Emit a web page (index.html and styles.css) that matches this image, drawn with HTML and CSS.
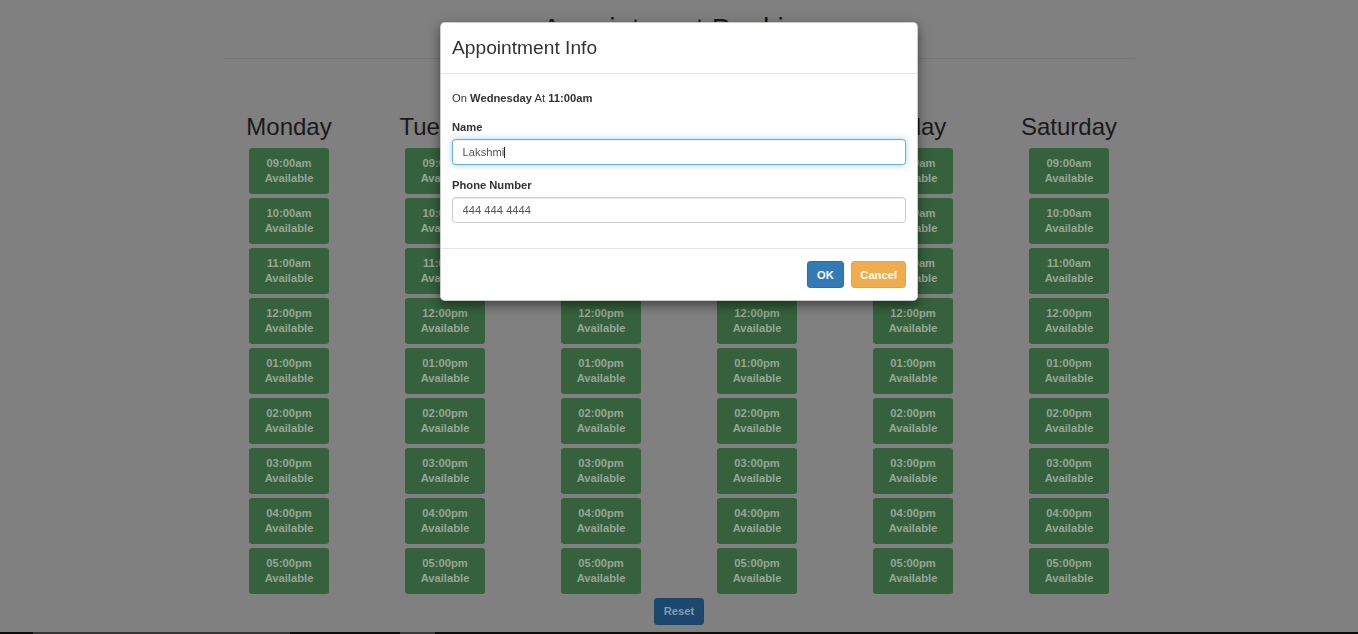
FILE: index.html
```html
<!DOCTYPE html>
<html lang="en">
<head>
<meta charset="utf-8">
<title>Appointment Booking</title>
<link rel="stylesheet" href="styles.css">
</head>
<body>
<div class="page">
  <h1 class="page-title">Appointment Booking</h1>
  <hr class="divider">
  <div class="schedule">
    <div class="day">
      <h2 class="day-name">Monday</h2>
      <div class="slots">
        <button class="slot">09:00am<br>Available</button>
        <button class="slot">10:00am<br>Available</button>
        <button class="slot">11:00am<br>Available</button>
        <button class="slot">12:00pm<br>Available</button>
        <button class="slot">01:00pm<br>Available</button>
        <button class="slot">02:00pm<br>Available</button>
        <button class="slot">03:00pm<br>Available</button>
        <button class="slot">04:00pm<br>Available</button>
        <button class="slot">05:00pm<br>Available</button>
      </div>
    </div>
    <div class="day">
      <h2 class="day-name">Tuesday</h2>
      <div class="slots">
        <button class="slot">09:00am<br>Available</button>
        <button class="slot">10:00am<br>Available</button>
        <button class="slot">11:00am<br>Available</button>
        <button class="slot">12:00pm<br>Available</button>
        <button class="slot">01:00pm<br>Available</button>
        <button class="slot">02:00pm<br>Available</button>
        <button class="slot">03:00pm<br>Available</button>
        <button class="slot">04:00pm<br>Available</button>
        <button class="slot">05:00pm<br>Available</button>
      </div>
    </div>
    <div class="day">
      <h2 class="day-name">Wednesday</h2>
      <div class="slots">
        <button class="slot">09:00am<br>Available</button>
        <button class="slot">10:00am<br>Available</button>
        <button class="slot">11:00am<br>Available</button>
        <button class="slot">12:00pm<br>Available</button>
        <button class="slot">01:00pm<br>Available</button>
        <button class="slot">02:00pm<br>Available</button>
        <button class="slot">03:00pm<br>Available</button>
        <button class="slot">04:00pm<br>Available</button>
        <button class="slot">05:00pm<br>Available</button>
      </div>
    </div>
    <div class="day">
      <h2 class="day-name">Thursday</h2>
      <div class="slots">
        <button class="slot">09:00am<br>Available</button>
        <button class="slot">10:00am<br>Available</button>
        <button class="slot">11:00am<br>Available</button>
        <button class="slot">12:00pm<br>Available</button>
        <button class="slot">01:00pm<br>Available</button>
        <button class="slot">02:00pm<br>Available</button>
        <button class="slot">03:00pm<br>Available</button>
        <button class="slot">04:00pm<br>Available</button>
        <button class="slot">05:00pm<br>Available</button>
      </div>
    </div>
    <div class="day">
      <h2 class="day-name">Friday</h2>
      <div class="slots">
        <button class="slot">09:00am<br>Available</button>
        <button class="slot">10:00am<br>Available</button>
        <button class="slot">11:00am<br>Available</button>
        <button class="slot">12:00pm<br>Available</button>
        <button class="slot">01:00pm<br>Available</button>
        <button class="slot">02:00pm<br>Available</button>
        <button class="slot">03:00pm<br>Available</button>
        <button class="slot">04:00pm<br>Available</button>
        <button class="slot">05:00pm<br>Available</button>
      </div>
    </div>
    <div class="day">
      <h2 class="day-name">Saturday</h2>
      <div class="slots">
        <button class="slot">09:00am<br>Available</button>
        <button class="slot">10:00am<br>Available</button>
        <button class="slot">11:00am<br>Available</button>
        <button class="slot">12:00pm<br>Available</button>
        <button class="slot">01:00pm<br>Available</button>
        <button class="slot">02:00pm<br>Available</button>
        <button class="slot">03:00pm<br>Available</button>
        <button class="slot">04:00pm<br>Available</button>
        <button class="slot">05:00pm<br>Available</button>
      </div>
    </div>
  </div>
  <div class="actions">
    <button class="btn-reset">Reset</button>
  </div>
</div>
<div class="bottom-strip"></div>

<div class="modal">
  <div class="modal-dialog">
    <div class="modal-header">
      <h3 class="modal-title">Appointment Info</h3>
    </div>
    <div class="modal-body">
      <p class="info">On <b>Wednesday</b> At <b>11:00am</b></p>
      <div class="form-group">
        <label class="label">Name</label>
        <div class="field">
          <input class="form-control focused" type="text" value="Lakshmi">
          <span class="caret"></span>
        </div>
      </div>
      <div class="form-group">
        <label class="label">Phone Number</label>
        <input class="form-control" type="text" value="444 444 4444">
      </div>
    </div>
    <div class="modal-footer">
      <button class="btn btn-primary">OK</button>
      <button class="btn btn-warning">Cancel</button>
    </div>
  </div>
</div>
</body>
</html>
```
FILE: styles.css
```css
* { box-sizing: border-box; }

html, body { margin: 0; padding: 0; }

body {
  background: #808080;
  font-family: "Liberation Sans", Arial, Helvetica, sans-serif;
  font-size: 11.2px;
  line-height: 16px;
  color: #1a1a1a;
  height: 634px;
  overflow: hidden;
}

.page {
  width: 936px;
  margin: 0 auto;
  padding: 0 12px;
}

.page-title {
  margin: 14px 0 0;
  font-size: 28.8px;
  font-weight: normal;
  line-height: 31.7px;
  text-align: center;
  color: #1a1a1a;
}

.divider {
  margin: 12px 0 0;
  border: 0;
  border-top: 1px solid #777;
  height: 0;
}

.schedule {
  display: grid;
  grid-template-columns: repeat(6, 156px);
  margin: 55px -12px 0;
}

.day {
  display: flex;
  flex-direction: column;
  align-items: center;
}

.day-name {
  margin: 0 0 7.6px;
  font-size: 24px;
  font-weight: normal;
  line-height: 26.4px;
  color: #1a1a1a;
}

.slots {
  display: flex;
  flex-direction: column;
  gap: 4px;
}

.slot {
  width: 80px;
  height: 46px;
  padding: 8px 0;
  margin: 0;
  border: 0;
  border-radius: 3.2px;
  background: #35613c;
  color: #95a796;
  font-family: inherit;
  font-size: 11.2px;
  font-weight: bold;
  line-height: 15px;
  text-align: center;
}

.actions {
  display: flex;
  justify-content: center;
  margin-top: 4px;
}

.btn-reset {
  height: 27px;
  padding: 0 9px;
  margin: 0;
  border: 1px solid #1a4468;
  border-radius: 3.2px;
  background: #1c4870;
  color: #8699b0;
  font-family: inherit;
  font-size: 11.2px;
  font-weight: bold;
}

.bottom-strip {
  height: 2px;
  margin-top: 7px;
  background: linear-gradient(to right,
    #0d0d0d 0, #0d0d0d 33px,
    #363636 33px, #363636 290px,
    #0d0d0d 290px, #0d0d0d 400px,
    #3a3a3a 400px, #3a3a3a 435px,
    #0d0d0d 435px, #0d0d0d 100%);
}

/* Modal */
.modal {
  position: fixed;
  top: 0;
  left: 0;
  right: 0;
  bottom: 0;
}

.modal-dialog {
  width: 478px;
  margin: 22px auto 0;
  background: #fff;
  border: 1px solid rgba(0, 0, 0, 0.2);
  border-radius: 4.8px;
  box-shadow: 0 4px 12px rgba(0, 0, 0, 0.5);
  color: #333;
}

.modal-header {
  padding: 12px 12px 12px 11px;
  border-bottom: 1px solid #e5e5e5;
}

.modal-title {
  margin: 0;
  font-size: 19.2px;
  font-weight: normal;
  line-height: 26px;
  color: #333;
}

.modal-body {
  padding: 12px 12px 13px 11px;
}

.info {
  margin: 4px 0 13px;
  line-height: 16px;
}

.form-group {
  margin-bottom: 12px;
}

.label {
  display: block;
  margin-bottom: 4px;
  font-weight: bold;
  line-height: 16px;
}

.field {
  position: relative;
}

.form-control {
  display: block;
  width: 100%;
  height: 26px;
  padding: 0 9.6px;
  margin: 0;
  font-family: inherit;
  font-size: 11.2px;
  color: #555;
  background: #fff;
  border: 1px solid #ccc;
  border-radius: 3.2px;
  box-shadow: inset 0 1px 1px rgba(0, 0, 0, 0.075);
  outline: 0;
}

.modal-body .form-control {
  width: calc(100% + 1px);
}

.form-control.focused {
  border-color: #66afe9;
  box-shadow: inset 0 1px 1px rgba(0, 0, 0, 0.075), 0 0 6.4px rgba(102, 175, 233, 0.6);
}

.caret {
  position: absolute;
  left: 52px;
  top: 8px;
  width: 1px;
  height: 11px;
  background: #222;
}

.modal-footer {
  display: flex;
  justify-content: flex-end;
  gap: 7px;
  padding: 12px 11px 12px 12px;
  border-top: 1px solid #e5e5e5;
}

.btn {
  height: 27px;
  margin: 0;
  border: 1px solid transparent;
  border-radius: 3.2px;
  color: #fff;
  font-family: inherit;
  font-size: 11.2px;
  font-weight: bold;
}

.btn-primary {
  padding: 0 9.5px;
  background: #337ab7;
  border-color: #2e6da4;
}

.btn-warning {
  padding: 0 8px;
  background: #f0ad4e;
  border-color: #eea236;
}
```
